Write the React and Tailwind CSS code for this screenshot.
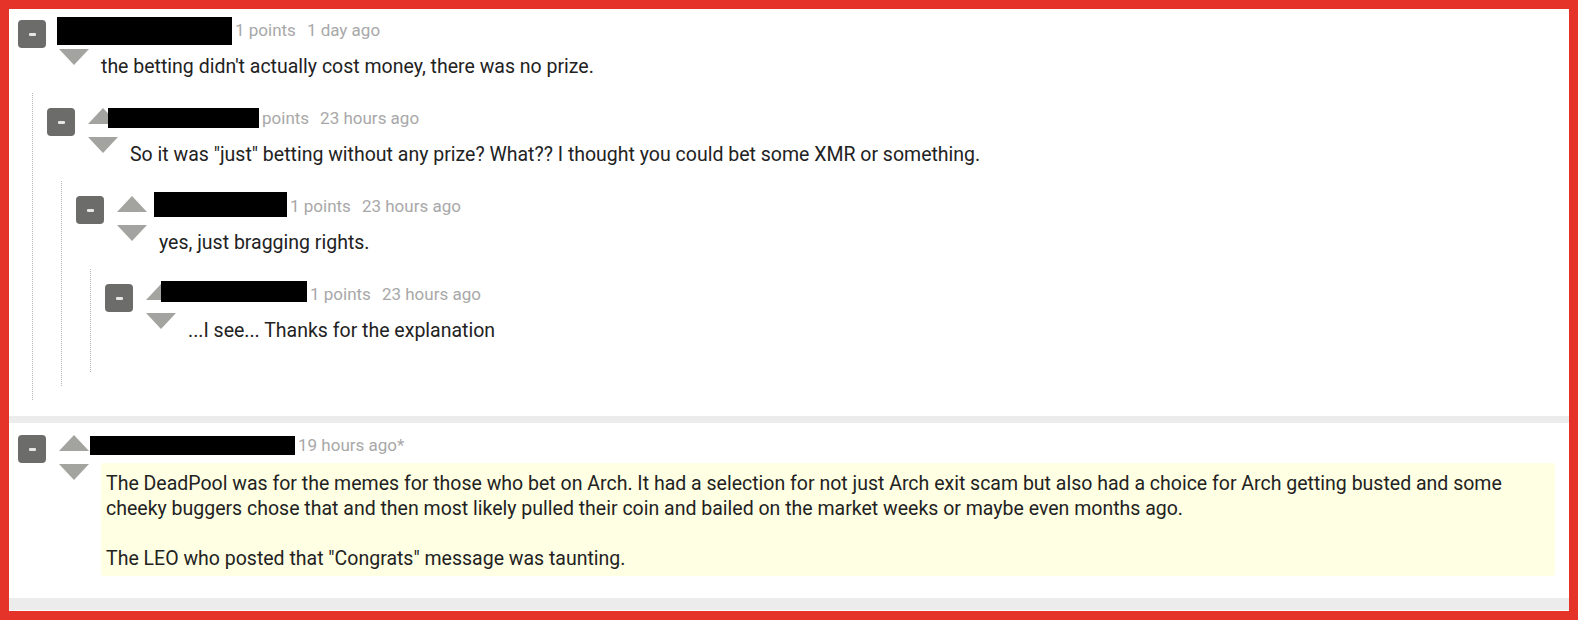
import React from 'react';

const font = { fontFamily: 'Roboto, "Liberation Sans", sans-serif' };

function Votes() {
  return (
    <div className="ml-[13px] flex w-[30px] shrink-0 flex-col">
      <div className="h-0 w-0 border-x-[15px] border-b-[16px] border-x-transparent border-b-[#a3a3a0]" />
      <div className="mt-[13px] h-0 w-0 border-x-[15px] border-t-[16px] border-x-transparent border-t-[#a3a3a0]" />
    </div>
  );
}

function Comment({ box, points, time, children, leaf, body }) {
  return (
    <div>
      <div className="flex items-start">
        <button className="flex h-7 w-7 shrink-0 items-center justify-center rounded-[4px] bg-[#6c6c6a]">
          <span className="block h-[3px] w-[7px] rounded-[1px] bg-[#e6e6e6]" />
        </button>
        <Votes />
        <div className="ml-3 min-w-0 flex-1">
          <div className="flex h-7 items-start">
            {/* redacted username */}
            <span className={`relative z-10 shrink-0 bg-black ${box}`} />
            <span className="ml-[3px] text-[17px] leading-[21px] text-[#a8a8a8]">
              {points && <span className="mr-[11px]">{points}</span>}
              <span>{time}</span>
            </span>
          </div>
          <div className={leaf ? 'mb-[15px]' : ''}>{body}</div>
        </div>
      </div>
      {children && (
        <div className="ml-[14px] mt-[14px] border-l border-dotted border-[#b5b5b5] pb-[14px] pl-[14px] pt-[15px]">
          {children}
        </div>
      )}
    </div>
  );
}

function Text({ children }) {
  return <p className="mt-[6px] text-[19.5px] leading-[25px] text-[#222]">{children}</p>;
}

export default function App() {
  return (
    <div className="h-[620px] w-[1578px] border-[9px] border-[#e6332a] bg-white" style={font}>
      <div className="pb-[16px] pl-[9px] pt-[11px]">
        <Comment
          box="-ml-[44px] -mt-[3px] h-[28px] w-[175px]"
          points="1 points"
          time="1 day ago"
          body={<Text>the betting didn't actually cost money, there was no prize.</Text>}
        >
          <Comment
            box="-ml-[22px] mt-0 h-[20px] w-[151px]"
            points="points"
            time="23 hours ago"
            body={<Text>So it was "just" betting without any prize? What?? I thought you could bet some XMR or something.</Text>}
          >
            <Comment
              box="-ml-[5px] -mt-[4px] h-[25px] w-[133px]"
              points="1 points"
              time="23 hours ago"
              body={<Text>yes, just bragging rights.</Text>}
            >
              <Comment
                leaf
                box="-ml-[27px] -mt-[3px] h-[21px] w-[146px]"
                points="1 points"
                time="23 hours ago"
                body={<Text>...I see... Thanks for the explanation</Text>}
              />
            </Comment>
          </Comment>
        </Comment>
      </div>

      <div className="h-[7px] bg-[#ececec]" />

      <div className="pb-[22px] pl-[9px] pr-[14px] pt-[12px]">
        <Comment
          box="-ml-[11px] mt-[1px] h-[19px] w-[205px]"
          time="19 hours ago*"
          body={
            <div className="rounded-[3px] bg-[#ffffe3] pb-[5px] pl-[5px] pr-[10px] pt-[8px] text-[19.5px] leading-[25px] text-[#222]">
              <p className="mb-[25px]">
                The DeadPool was for the memes for those who bet on Arch. It had a selection for not just Arch exit scam but also had a choice for Arch getting busted and some cheeky buggers chose that and then most likely pulled their coin and bailed on the market weeks or maybe even months ago.
              </p>
              <p>The LEO who posted that "Congrats" message was taunting.</p>
            </div>
          }
        />
      </div>

      <div className="h-3 bg-[#ececec]" />
    </div>
  );
}
